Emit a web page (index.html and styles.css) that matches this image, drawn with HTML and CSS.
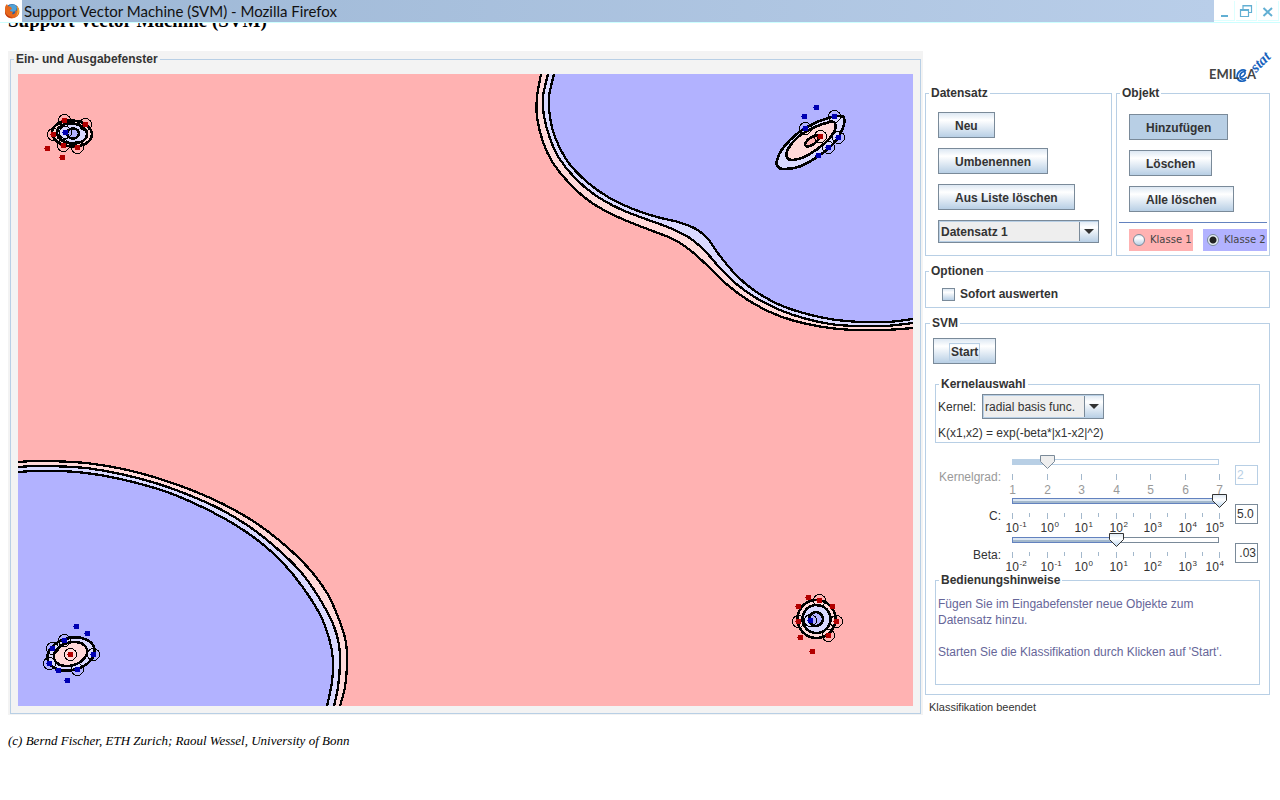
FILE: index.html
```html
<!DOCTYPE html>
<html lang="de">
<head>
<meta charset="utf-8">
<title>Support Vector Machine (SVM)</title>
<link rel="stylesheet" href="styles.css">
</head>
<body>
<header class="titlebar">
  <svg class="app-icon" viewBox="0 0 16 16" aria-hidden="true">
    <circle cx="8" cy="8" r="7" fill="#2c5f9e"/>
    <path d="M5 3C7 1 11 1 13 4L12 8 8 9 5 7Z" fill="#4fa3d8"/>
    <path d="M1 5C1 3 2 2 3 1L4 3 7 4 8 6 6 7 6 8 9 9 8 11C11 12 12 9 11 7L13 8C14 6 13 4 12 2 17 6 16 12 12 14 8 17 2 15 1 10Z" fill="#e6681c"/>
    <path d="M13 3C16 7 15 11 12 13 14 10 14 7 13 3Z" fill="#f9c53a"/>
    <path d="M1 8C2 12 5 14 9 14 5 16 1 13 1 8Z" fill="#bd3413"/>
  </svg>
  <div class="window-title">Support Vector Machine (SVM) - Mozilla Firefox</div>
  <div class="window-buttons">
    <button aria-label="Minimieren"><svg viewBox="0 0 16 16"><path d="M5 13h7" stroke-width="2"/></svg></button>
    <button aria-label="Wiederherstellen"><svg viewBox="0 0 16 16"><path d="M5 6V2.500H13.500V9.500H11M5 3H13.500M2.500 6.500H10.500V13.500H2.500ZM2.500 7.500H10.500" stroke-width="1.200"/></svg></button>
    <button aria-label="Schließen"><svg viewBox="0 0 16 16"><path d="M3.500 5L12 13M12 5L3.500 13" stroke-width="2"/></svg></button>
  </div>
</header>
<div class="heading-clip"><h1>Support Vector Machine (SVM)</h1></div>

<main class="applet">
  <section class="canvas-panel">
    <fieldset class="group canvas-group">
      <legend>Ein- und Ausgabefenster</legend>
      <svg id="plot" class="plot" viewBox="18 74 895 632" role="img" aria-label="Klassifikation"></svg>
    </fieldset>
  </section>

  <aside class="controls">
    <svg class="logo" viewBox="0 0 64 34" role="img" aria-label="EMILeA stat">
      <path d="M35 26C37 26 40 23 39 21C37 20 34 22 34 25C34 29 38 29 41 26M40 20C36 17 31 21 31 26C32 31 37 31 40 29" fill="none" stroke="#1661bd" stroke-width="1.600"/>
      <text x="3" y="28" class="logo-dark">EMIL</text>
      <text x="41" y="28" class="logo-dark">A</text>
      <text x="50" y="22" class="logo-stat" transform="rotate(-45 50 22)">stat</text>
    </svg>

    <div class="top-groups">
      <fieldset class="group data-group">
        <legend>Datensatz</legend>
        <div class="stack">
          <button class="btn">Neu</button>
          <button class="btn">Umbenennen</button>
          <button class="btn">Aus Liste löschen</button>
          <select class="combo combo-data" aria-label="Datensatz"><option>Datensatz 1</option></select>
        </div>
      </fieldset>
      <fieldset class="group object-group">
        <legend>Objekt</legend>
        <div class="stack">
          <button class="btn pressed">Hinzufügen</button>
          <button class="btn">Löschen</button>
          <button class="btn">Alle löschen</button>
        </div>
        <hr class="rule">
        <div class="classes">
          <label class="class-one"><input type="radio" name="klasse">Klasse 1</label>
          <label class="class-two"><input type="radio" name="klasse" checked>Klasse 2</label>
        </div>
      </fieldset>
    </div>

    <fieldset class="group options-group">
      <legend>Optionen</legend>
      <label class="check"><input type="checkbox">Sofort auswerten</label>
    </fieldset>

    <fieldset class="group svm-group">
      <legend>SVM</legend>
      <button class="btn start"><span>Start</span></button>
      <fieldset class="group kernel-group">
        <legend>Kernelauswahl</legend>
        <div class="kernel-row">
          <label for="kernel">Kernel:</label>
          <select id="kernel" class="combo combo-kernel"><option>radial basis func.</option></select>
        </div>
        <p class="formula">K(x1,x2) = exp(-beta*|x1-x2|^2)</p>
      </fieldset>

      <div class="sliders">
        <div class="slider-row disabled">
          <label for="grad">Kernelgrad:</label>
          <div class="slider">
            <svg class="scale" viewBox="0 0 230 39" data-fill="35" data-labels="1 2 3 4 5 6 7"></svg>
            <input id="grad" type="range" min="1" max="7" value="2" disabled>
          </div>
          <input class="value" type="text" value="2" aria-label="Wert Kernelgrad" disabled>
        </div>
        <div class="slider-row">
          <label for="cpar">C:</label>
          <div class="slider">
            <svg class="scale" viewBox="0 0 230 39" data-fill="207" data-labels="10^-1 10^0 10^1 10^2 10^3 10^4 10^5"></svg>
            <input id="cpar" type="range" min="-1" max="5" value="5">
          </div>
          <input class="value" type="text" value="5.0" aria-label="Wert C">
        </div>
        <div class="slider-row">
          <label for="beta">Beta:</label>
          <div class="slider">
            <svg class="scale" viewBox="0 0 230 39" data-fill="104" data-labels="10^-2 10^-1 10^0 10^1 10^2 10^3 10^4"></svg>
            <input id="beta" type="range" min="-2" max="4" value="1">
          </div>
          <input class="value value-right" type="text" value=".03" aria-label="Wert Beta">
        </div>
      </div>

      <fieldset class="group hints-group">
        <legend>Bedienungshinweise</legend>
        <p>Fügen Sie im Eingabefenster neue Objekte zum Datensatz hinzu.</p>
        <p>Starten Sie die Klassifikation durch Klicken auf 'Start'.</p>
      </fieldset>
    </fieldset>
    <p class="status">Klassifikation beendet</p>
  </aside>
</main>
<footer class="credits">(c) Bernd Fischer, ETH Zurich; Raoul Wessel, University of Bonn</footer>
<script src="plot.js"></script>
</body>
</html>
```
FILE: styles.css
```css
* { box-sizing: border-box; }
body {
  margin: 0;
  background: #fff;
  color: #333;
  font: 12px/16px "Liberation Sans", Arial, sans-serif;
}
p, h1 { margin: 0; }
button, select, input { font: inherit; color: inherit; margin: 0; border-radius: 0; }

/* Window title */
.titlebar {
  display: flex;
  align-items: center;
  height: 23px;
  border-bottom: 1px solid #cff;
}
.app-icon { width: 16px; height: 16px; margin: 0 2px 0 4px; flex: none; }
.window-title {
  flex: 1;
  height: 22px;
  padding-left: 2px;
  background: linear-gradient(90deg, #9db7d5, #b9cee9);
  color: #111;
  font: 15px/23px "Lato", sans-serif;
}
.window-buttons { display: flex; gap: 1px; padding-right: 1px; }
.window-buttons button {
  width: 21px;
  height: 20px;
  padding: 2px;
  border: 0;
  border-right: 1px solid #dff;
  border-bottom: 1px solid #dff;
  background: #fff;
}
.window-buttons svg { display: block; width: 16px; height: 16px; fill: none; stroke: #62afd3; }

.heading-clip { height: 28px; overflow: hidden; padding-left: 8px; }
.heading-clip h1 {
  margin-top: -12px;
  color: #000;
  font: bold 19px/20px "Liberation Serif", "Times New Roman", serif;
}

/* Applet */
.applet { display: flex; gap: 2px; align-items: flex-start; padding: 0 10px 0 8px; }
.canvas-panel { flex: 1; min-width: 0; padding: 0 2px 1px; background: #f3f3f3; }
.plot { display: block; width: 100%; height: auto; background: #ffb2b2; }
.controls { flex: none; width: 345px; }

.group { margin: 0; padding: 0 3px; border: 1px solid #b8cfe5; min-width: 0; }
.group > legend { padding: 0 2px; font-weight: bold; line-height: 17px; }
.canvas-group { padding: 6px 7px 7px; }
.canvas-group > legend { margin-left: -4px; }

.logo { display: block; width: 64px; height: 34px; margin-left: auto; overflow: visible; }
.logo-dark { font: bold 13px "Lato", sans-serif; fill: #444; }
.logo-stat { font: italic bold 15px "Liberation Serif", serif; fill: #1661bd; }

.top-groups { display: flex; gap: 4px; }
.data-group { flex: 1; }
.object-group { width: 154px; padding: 0 2px; }
.object-group > legend { margin-left: 1px; }
.stack { display: flex; flex-direction: column; align-items: flex-start; gap: 10px; padding: 10px 9px 12px; }
.object-group .stack { padding: 12px 10px 10px; }

.btn {
  height: 26px;
  padding: 2px 16px 0;
  border: 1px solid #7a8a99;
  background: linear-gradient(#dde8f3, #fff 30%, #b8cfe5);
  font-weight: bold;
  line-height: 22px;
}
.pressed { background: #b8cfe5; }

.combo {
  appearance: none;
  border: 1px solid #7a8a99;
  padding: 0 20px 0 2px;
  background:
    url("data:image/svg+xml,%3Csvg xmlns='http://www.w3.org/2000/svg' width='19' height='21'%3E%3Cpath d='M0 0v21' stroke='%237a8a99' stroke-width='2'/%3E%3Cpath d='M5 8h10l-5 5z' fill='%23333'/%3E%3C/svg%3E") right center no-repeat,
    linear-gradient(#dde8f3, #fff 30%, #b8cfe5) right / 19px 100% no-repeat,
    #eee;
  box-shadow: inset 1px 1px #b8cfe5, inset 0 -1px #b8cfe5;
}
.combo-data { width: 161px; height: 23px; font-weight: bold; }
.combo-kernel { width: 122px; height: 25px; }

.rule { margin: 0; border: 0; height: 1px; background: #6382bf; }
.classes { display: flex; gap: 10px; padding: 6px 0 4px 10px; }
.classes label {
  display: flex;
  align-items: center;
  flex: 1;
  gap: 5px;
  height: 22px;
  padding-left: 4px;
  font: 10px/24px "DejaVu Sans", sans-serif;
  color: #444;
  white-space: nowrap;
}
.class-one { background: #ffb2b2; }
.class-two { background: #b2b2ff; }
input[type="radio"], input[type="checkbox"] {
  appearance: none;
  flex: none;
  width: 12px;
  height: 12px;
  border: 1px solid #7a8a99;
  background: linear-gradient(#dde8f3, #fff 30%, #b8cfe5);
}
input[type="radio"] { border-radius: 50%; }
input[type="radio"]:checked { background: radial-gradient(circle, #222 3px, #e8f0f8 4px); }
input[type="checkbox"] { width: 13px; height: 13px; }

.options-group { margin-top: 7px; padding: 5px 13px 4px; height: 45px; }
.options-group > legend { margin-left: -10px; }
.check { display: flex; align-items: center; gap: 5px; padding-left: 3px; line-height: 18px; font-weight: bold; }

.svm-group { margin-top: 7px; padding: 6px 9px 9px; }
.svm-group > legend { margin-left: -5px; }
.start { display: block; margin-left: -2px; padding: 1px 15px 0; }
.start span { display: block; padding: 0 1px; border: 1px solid #b8cfe5; line-height: 16px; }
.kernel-group { margin-top: 12px; padding: 1px 2px; }
.kernel-group > legend, .hints-group > legend { margin-left: 1px; }
.kernel-row { display: flex; align-items: center; gap: 6px; }
.formula { padding-top: 6px; }

.sliders { padding-top: 13px; margin-bottom: -1px; }
.slider-row { display: flex; height: 39px; }
.slider-row > label { width: 66px; padding-top: 13px; text-align: right; }
.slider { display: grid; width: 230px; margin-right: 4px; }
.scale, .slider input { grid-area: 1 / 1; }
.scale { display: block; width: 230px; height: 39px; overflow: visible; fill: #333; }
.slider input {
  appearance: none;
  width: 222px;
  height: 14px;
  margin: -1px 0 0 4px;
  background: transparent;
}
.slider input::-webkit-slider-thumb {
  appearance: none;
  width: 15px;
  height: 14px;
  background: url("data:image/svg+xml,%3Csvg xmlns='http://www.w3.org/2000/svg' width='15' height='14'%3E%3Cdefs%3E%3ClinearGradient id='g' x2='0' y2='1'%3E%3Cstop stop-color='%23dde8f3'/%3E%3Cstop offset='.4' stop-color='%23fff'/%3E%3Cstop offset='1' stop-color='%23b8d4ee'/%3E%3C/linearGradient%3E%3C/defs%3E%3Cpath d='M.5 .5h14v6l-7 7-7-7z' fill='url(%23g)' stroke='%23333'/%3E%3C/svg%3E");
}
.disabled .slider input::-webkit-slider-thumb {
  background: url("data:image/svg+xml,%3Csvg xmlns='http://www.w3.org/2000/svg' width='15' height='14'%3E%3Cpath d='M.5 .5h14v6l-7 7-7-7z' fill='%23eee' stroke='%237a8a99'/%3E%3C/svg%3E");
}
.value {
  width: 23px;
  height: 20px;
  margin-top: 9px;
  padding: 0 1px;
  border: 1px solid #7a8a99;
  background: #fff;
}
.value-right { text-align: right; }
.disabled { color: #999; }
.disabled .scale { fill: #999; }
.disabled .value { border-color: #b8cfe5; color: #b8cfe5; }

.hints-group { height: 113px; padding: 7px 32px 7px 2px; color: #669; }
.hints-group > legend { color: #333; }
.hints-group p + p { margin-top: 16px; }

.status { padding: 4px 4px 0; font-size: 11px; }
.credits {
  padding: 17px 8px 0;
  color: #000;
  font: italic 13px/18px "Liberation Serif", "Times New Roman", serif;
}
```
FILE: plot.js
```js
const NS = "http://www.w3.org/2000/svg";
const COLORS = { red: "#ffb2b2", pink: "#ffd9d9", pale: "#d9d9ff", blue: "#b2b2ff" };

function add(parent, tag, attrs, text) {
  const el = document.createElementNS(NS, tag);
  for (const k in attrs) el.setAttribute(k, attrs[k]);
  if (text !== undefined) el.textContent = text;
  parent.appendChild(el);
  return el;
}

// Catmull-Rom spline through the points, as cubic segments
function spline(p, closed) {
  const n = p.length;
  const at = i => closed ? p[(i + n) % n] : p[Math.max(0, Math.min(n - 1, i))];
  let d = `M${p[0]}`;
  for (let i = 0; i < (closed ? n : n - 1); i++) {
    const a = at(i - 1), b = at(i), c = at(i + 1), e = at(i + 2);
    d += `C${b[0] + (c[0] - a[0]) / 6} ${b[1] + (c[1] - a[1]) / 6} ${c[0] - (e[0] - b[0]) / 6} ${c[1] - (e[1] - b[1]) / 6} ${c[0]} ${c[1]}`;
  }
  return d;
}

const plot = document.getElementById("plot");
const stroke = { stroke: "#000", "stroke-width": 2.3, "shape-rendering": "crispEdges" };
const ring = { ...stroke, "stroke-width": 2.6 };

function contour(points, corner, fill) {
  const d = spline(points, false);
  add(plot, "path", { d: `${d}L${corner}Z`, fill });
  add(plot, "path", { d, fill: "none", ...stroke });
}
function blob(points, fill) {
  add(plot, "path", { d: spline(points, true), fill, ...ring });
}
function ellipse(cx, cy, rx, ry, angle, fill) {
  add(plot, "ellipse", { cx, cy, rx, ry, fill, transform: `rotate(${angle} ${cx} ${cy})`, ...ring });
}
function samples(list, color) {
  for (const [x, y, support] of list) {
    if (support) add(plot, "circle", { cx: x, cy: y, r: 6, fill: "none", stroke: "#000", "stroke-width": 1, "shape-rendering": "crispEdges" });
    add(plot, "rect", { x: x - 2.5, y: y - 2.5, width: 5, height: 5, fill: color });
    add(plot, "rect", { x: x - 3.5, y: y - 0.5, width: 1, height: 1, fill: color });
  }
}

const topRight = [913, 74];
contour([[541,74],[537,97],[537,117],[543,142],[553,163],[570,184],[592,203],[620,218],[650,230],[673,239],[690,250],[710,268],[727,284.5],[747,299.5],[770,312],[793,320.5],[823,327],[852,330],[885,330],[913,328]], topRight, COLORS.pink);
contour([[548,74],[543,97],[544,116],[550,138.500],[559,158],[575,178],[595,195],[620,209],[647,219.500],[670,228],[689,237.500],[705,251],[720,268],[737,284.500],[757,298.500],[780,310],[803,318],[830,324],[855,326],[885,326],[913,323]], topRight, COLORS.pale);
contour([[554,74],[549,97],[550,117],[555,137],[568,162],[587,182],[608,197],[633,209],[657,217],[678,222],[696,229],[708,239],[720,256],[737,276],[755,291],[780,305],[807,314],[833,319.5],[860,322],[888,322],[913,319]], topRight, COLORS.blue);

const bottomLeft = [18, 706];
contour([[18,462],[36,461],[63,461.5],[90,463.5],[123,469],[157,478],[190,489.5],[223,504],[253,521],[280,541],[307,566.5],[327,593],[340,622],[346,643],[347,663],[345,687],[340,706]], bottomLeft, COLORS.pink);
contour([[18,467],[36,466],[63,466.5],[90,468.5],[123,474.5],[157,483.5],[190,495.5],[220,509],[247,525],[273,545],[300,571],[318,596],[333,624],[339,645],[340,663],[338,687],[334,706]], bottomLeft, COLORS.pale);
contour([[18,472],[36,471],[70,471.5],[100,475],[133,482],[167,492],[200,506],[233,523.5],[260,542],[283,563],[303,587.5],[320,614.5],[329,638],[333,660],[332,682],[327,706]], bottomLeft, COLORS.blue);

const RED = "#b20000", BLUE = "#0000b2";

ellipse(72, 133.5, 20, 13, 4, COLORS.pink);
ellipse(72, 133.5, 15, 10, 6, COLORS.pale);
ellipse(73, 133.5, 6, 5, 0, COLORS.blue);
samples([[64.5,120.5,1],[85.5,124.5,1],[53.5,134.5,1],[47.5,148.5],[62.5,157.5],[63.5,145.5,1],[77.5,147.5,1]], RED);
samples([[65.5,132.5,1]], BLUE);

blob([[844,118],[840,116],[832,117],[815,123],[798,133],[783,148],[777,160],[778,167],[785,169],[801,166],[820,155],[835,142],[843,128]], COLORS.pale);
blob([[835,123],[830,122],[815,127],[798,137],[788,149],[787,157],[793,160],[808,155],[825,143],[834,132]], COLORS.pink);
ellipse(812, 141, 8, 3.5, -35, COLORS.red);
samples([[816.5,107.5],[804.5,116.5],[834.5,116.5,1],[805.5,128.5,1],[838.5,137.5,1],[828.5,147.5,1],[818.5,155.5]], BLUE);
samples([[820.5,136.5,1]], RED);

ellipse(71, 654, 24, 16, -14, COLORS.pale);
ellipse(70.5, 654, 17, 11.5, -17, COLORS.pink);
samples([[76.5,626.5],[87.5,633.5],[64.5,640.5,1],[52.5,648.5,1],[93.5,654.5,1],[49.5,663.5,1],[58.5,670.5],[77.5,669.5,1],[67.5,680.5]], BLUE);
samples([[70.5,654.5,1]], RED);

ellipse(816.5, 619, 19, 19, 0, COLORS.pink);
ellipse(816.5, 619, 14, 14, 0, COLORS.pale);
ellipse(816, 619, 7, 7, 0, COLORS.blue);
samples([[808.5,597.5],[819.5,600.5,1],[798.5,606.5],[832.5,606.5],[798.5,621.5,1],[836.5,621.5,1],[800.5,637.5],[828.5,635.5,1],[812.5,651.5]], RED);
samples([[810.5,620.5,1]], BLUE);

// Slider scales: track, ticks and labels
document.querySelectorAll(".scale").forEach(svg => {
  const off = svg.closest(".disabled");
  const labels = svg.dataset.labels.split(" ");
  const fill = +svg.dataset.fill;
  add(svg, "rect", { x: 11.5, y: 3.5, width: 206, height: 5, fill: "#fff", stroke: off ? "#b8cfe5" : "#7a8a99" });
  add(svg, "rect", { x: 11.5, y: 3.5, width: fill - 1, height: 5, fill: off ? "#b8cfe5" : "#a3b8cc", stroke: off ? "#b8cfe5" : "#6382bf" });
  if (!off) add(svg, "rect", { x: 12, y: 4, width: fill - 2, height: 2, fill: "#dce7f3" });
  labels.forEach((label, i) => {
    const x = 11.5 + Math.round(i * 34.5);
    add(svg, "path", { d: `M${x} 18v6`, stroke: "#a3b8cc" });
    if (!off && i < 6) add(svg, "path", { d: `M${x + 17} 18v4`, stroke: "#a3b8cc" });
    const [base, power] = label.split("^");
    if (!power) {
      add(svg, "text", { x, y: 38, "text-anchor": "middle" }, base);
    } else {
      const left = i === 6 ? x - 14 : x - 7;
      add(svg, "text", { x: left, y: 37 }, base);
      add(svg, "text", { x: left + 14, y: 32, "font-size": 8 }, power);
    }
  });
});
```
